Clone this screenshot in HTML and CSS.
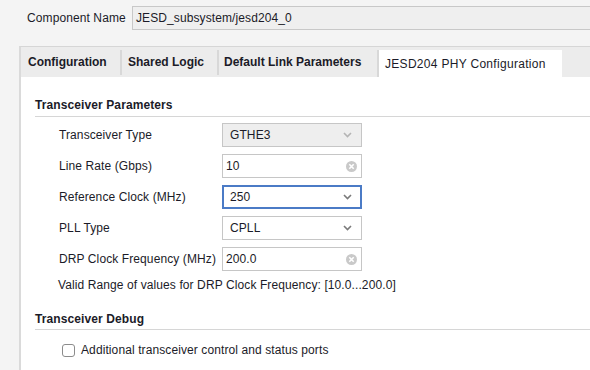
FILE: index.html
```html
<!DOCTYPE html>
<html>
<head>
<meta charset="utf-8">
<link rel="stylesheet" href="styles.css">
</head>
<body>
<div class="top">
  <span class="top-label">Component Name</span>
  <div class="name-field">JESD_subsystem/jesd204_0</div>
</div>
<div class="panel">
  <div class="tabbar">
    <div class="tab t1">Configuration</div>
    <div class="tab t2">Shared Logic</div>
    <div class="tab t3">Default Link Parameters</div>
    <div class="tab active">JESD204 PHY Configuration</div>
  </div>
  <div class="content">
    <div class="section-title">Transceiver Parameters</div>
    <div class="form">
      <div class="label">Transceiver Type</div>
      <div class="field combo disabled"><span>GTHE3</span>
        <svg class="chev" width="9" height="6" viewBox="0 0 9 6"><polyline points="1,1 4.5,4.5 8,1" fill="none" stroke="#b4b4b4" stroke-width="1.6"/></svg>
      </div>
      <div class="label">Line Rate (Gbps)</div>
      <div class="field text"><span>10</span>
        <svg class="clear" width="11" height="11" viewBox="0 0 11 11"><circle cx="5.5" cy="5.5" r="5.5" fill="#c9c9c9"/><path d="M3.3 3.3 L7.7 7.7 M7.7 3.3 L3.3 7.7" stroke="#fff" stroke-width="1.6"/></svg>
      </div>
      <div class="label">Reference Clock (MHz)</div>
      <div class="field combo focus"><span>250</span>
        <svg class="chev" width="9" height="6" viewBox="0 0 9 6"><polyline points="1,1 4.5,4.5 8,1" fill="none" stroke="#7a7a7a" stroke-width="1.6"/></svg>
      </div>
      <div class="label">PLL Type</div>
      <div class="field combo"><span>CPLL</span>
        <svg class="chev" width="9" height="6" viewBox="0 0 9 6"><polyline points="1,1 4.5,4.5 8,1" fill="none" stroke="#7a7a7a" stroke-width="1.6"/></svg>
      </div>
      <div class="label">DRP Clock Frequency (MHz)</div>
      <div class="field text"><span>200.0</span>
        <svg class="clear" width="11" height="11" viewBox="0 0 11 11"><circle cx="5.5" cy="5.5" r="5.5" fill="#c9c9c9"/><path d="M3.3 3.3 L7.7 7.7 M7.7 3.3 L3.3 7.7" stroke="#fff" stroke-width="1.6"/></svg>
      </div>
    </div>
    <div class="hint">Valid Range of values for DRP Clock Frequency: [10.0...200.0]</div>
    <div class="section-title second">Transceiver Debug</div>
    <label class="check-row"><span class="checkbox"></span>Additional transceiver control and status ports</label>
  </div>
</div>
</body>
</html>
```
FILE: styles.css
```css
html, body {
  margin: 0;
  padding: 0;
}
body {
  width: 590px;
  height: 370px;
  overflow: hidden;
  background: #f4f4f4;
  font-family: "Liberation Sans", Arial, sans-serif;
  font-size: 12px;
  letter-spacing: 0.1px;
  color: #1b1b28;
}
.top {
  display: flex;
  align-items: center;
  padding: 6px 0 0 27px;
  height: 24px;
}
.top-label {
  width: 105px;
}
.name-field {
  flex: 1;
  height: 22px;
  line-height: 22px;
  border: 1px solid #c8c8c8;
  border-right: none;
  background: #efefef;
  padding-left: 3px;
}
.panel {
  margin: 16px 0 0 19px;
  border-left: 2px solid #dadada;
  border-top: 1px solid #d6d6d6;
  height: 330px;
  display: flex;
  flex-direction: column;
}
.tabbar {
  display: flex;
  background: #ececec;
  padding-top: 2px;
  height: 28px;
}
.tab {
  box-sizing: border-box;
  padding-left: 7px;
  line-height: 24px;
  margin-bottom: 2px;
  margin-top: 1px;
  font-weight: bold;
  letter-spacing: 0;
  white-space: nowrap;
  border-right: 2px solid #d8d8d8;
}
.tab.t1 { width: 101px; }
.tab.t2 { width: 97px; padding-left: 6px; }
.tab.t3 { width: 158px; padding-left: 5px; border-right: none; }
.tab.active {
  width: 185px;
  font-weight: normal;
  background: #fff;
  border-left: 2px solid #d8d8d8;
  border-right: none;
  margin-bottom: 0;
  padding-left: 6px;
  line-height: 28px;
  letter-spacing: 0.3px;
}
.content {
  flex: 1;
  background: #fff;
  padding: 21px 0 0 14px;
}
.section-title {
  font-weight: bold;
  line-height: 15px;
  padding-bottom: 3px;
  border-bottom: 1px solid #d6d6d6;
}
.section-title.second {
  margin-top: 20px;
  padding-bottom: 2px;
}
.form {
  display: grid;
  grid-template-columns: 163px 140px;
  row-gap: 7px;
  margin-top: 6px;
  padding-left: 24px;
  align-items: center;
}
.field {
  height: 22px;
  border: 1px solid #c6c6c6;
  background: #fff;
  display: flex;
  align-items: center;
  justify-content: space-between;
  padding: 0 9px 0 7px;
}
.field.text {
  padding: 0 4px 0 3px;
}
.field.disabled {
  background: #eeeeee;
}
.field.focus {
  border: 2px solid #4b7bc6;
  height: 20px;
  padding: 0 8px 0 6px;
}
.hint {
  margin-top: 7px;
  padding-left: 23px;
  line-height: 14px;
}
.check-row {
  display: flex;
  align-items: center;
  margin-top: 13px;
  padding-left: 27px;
  line-height: 14px;
}
.checkbox {
  width: 11px;
  height: 11px;
  border: 1px solid #8c8c8c;
  border-radius: 3px;
  background: #fff;
  margin-right: 6px;
}
```
